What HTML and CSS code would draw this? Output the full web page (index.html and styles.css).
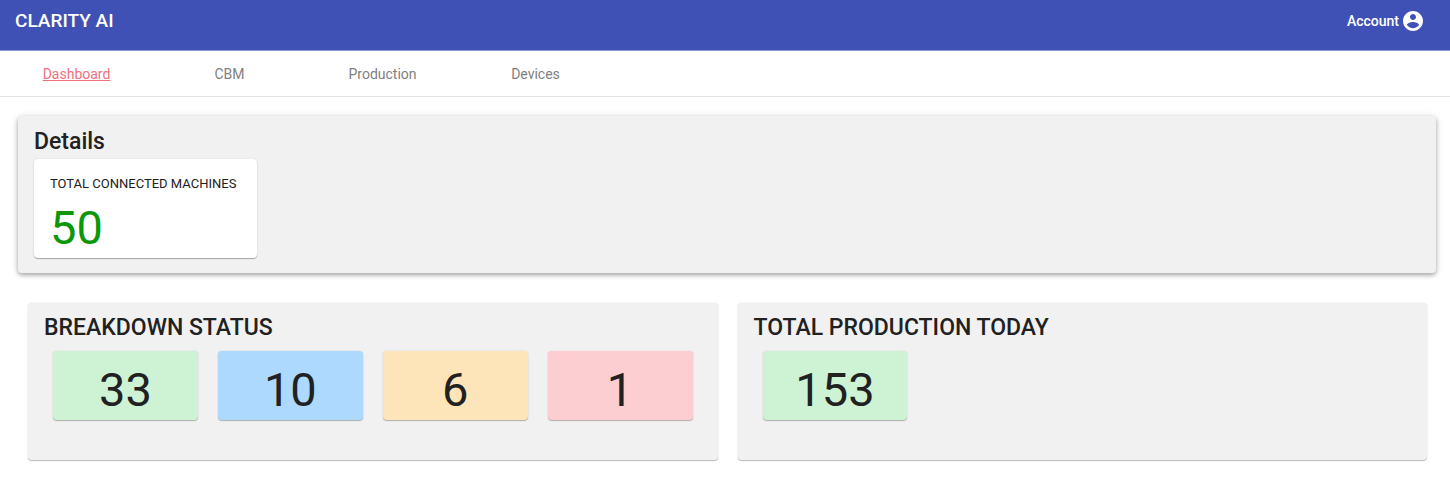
FILE: index.html
```html
<!DOCTYPE html>
<html lang="en">
<head>
    <meta charset="UTF-8">
    <meta name="viewport" content="width=device-width, initial-scale=1.0">
    <title>Clarity AI</title>
    <link rel="stylesheet" href="styles.css">
</head>
<body>
    <header class="topbar">
        <h1>CLARITY AI</h1>
        <button type="button" class="account">
            Account
            <svg viewBox="2 2 20 20" aria-hidden="true"><path fill="currentColor" d="M12 2C6.480 2 2 6.480 2 12s4.480 10 10 10 10-4.480 10-10S17.520 2 12 2zm0 3c1.660 0 3 1.340 3 3s-1.340 3-3 3-3-1.340-3-3 1.340-3 3-3zm0 14.200c-2.500 0-4.710-1.280-6-3.220.030-1.990 4-3.080 6-3.080 1.990 0 5.970 1.090 6 3.080-1.290 1.940-3.500 3.220-6 3.220z"/></svg>
        </button>
    </header>

    <nav class="tabs">
        <a href="#dashboard" class="active">Dashboard</a>
        <a href="#cbm">CBM</a>
        <a href="#production">Production</a>
        <a href="#devices">Devices</a>
    </nav>

    <main>
        <section class="panel details">
            <h2>Details</h2>
            <div class="machines">
                <p>TOTAL CONNECTED MACHINES</p>
                <strong>50</strong>
            </div>
        </section>

        <div class="row">
            <section class="panel">
                <h2>BREAKDOWN STATUS</h2>
                <div class="tiles">
                    <div class="tile green">33</div>
                    <div class="tile blue">10</div>
                    <div class="tile orange">6</div>
                    <div class="tile red">1</div>
                </div>
            </section>
            <section class="panel">
                <h2>TOTAL PRODUCTION TODAY</h2>
                <div class="tiles">
                    <div class="tile green">153</div>
                </div>
            </section>
        </div>
    </main>
</body>
</html>
```
FILE: styles.css
```css
* {
    box-sizing: border-box;
}

body {
    font-family: Roboto, sans-serif;
    background-color: white;
    color: #212121;
    margin: 0;
}

h1, h2, p {
    margin: 0;
}

.topbar {
    display: flex;
    justify-content: space-between;
    align-items: center;
    height: 51px;
    padding: 0 27px 9px 15px;
    background-color: #3f51b5;
    border-bottom: 1px solid #8f97d6;
    color: white;
}

.topbar h1 {
    font-size: 19px;
    line-height: 24px;
    font-weight: 500;
}

.account {
    display: flex;
    align-items: center;
    gap: 4px;
    padding: 0;
    border: none;
    background: none;
    color: white;
    font-family: inherit;
    font-size: 14px;
    font-weight: 500;
    cursor: pointer;
}

.account svg {
    width: 20px;
    height: 20px;
}

.tabs {
    display: flex;
    height: 46px;
    border-bottom: 1px solid #e4e4e4;
}

.tabs a {
    width: 153px;
    line-height: 46px;
    text-align: center;
    font-size: 14px;
    color: #808080;
    text-decoration: none;
}

.tabs a.active {
    color: #f07080;
    text-decoration: underline;
}

main {
    padding: 19px 14px 40px 18px;
}

.panel {
    min-height: 157px;
    padding: 10px 16px;
    background-color: #f1f1f1;
    border-radius: 4px;
    box-shadow: 0 1px 1px rgba(0, 0, 0, 0.25), 0 0 2px rgba(0, 0, 0, 0.1);
}

.panel h2 {
    font-size: 23px;
    line-height: 30px;
    font-weight: 500;
}

.details {
    padding: 11px 16px 15px;
    box-shadow: 0 2px 4px rgba(0, 0, 0, 0.3), 0 1px 8px rgba(0, 0, 0, 0.12);
}

.machines {
    width: fit-content;
    min-width: 223px;
    margin-top: 2px;
    padding: 15px 16px 0;
    height: 99px;
    background-color: white;
    border-radius: 4px;
    box-shadow: 0 1px 1px rgba(0, 0, 0, 0.3), 0 0 2px rgba(0, 0, 0, 0.1);
}

.machines p {
    font-size: 13px;
    line-height: 20px;
}

.machines strong {
    display: block;
    font-size: 47px;
    line-height: 68px;
    font-weight: 400;
    color: #0a980a;
}

.row {
    display: grid;
    grid-template-columns: 1fr 1fr;
    gap: 20px;
    margin-top: 30px;
    padding: 0 9px 0 10px;
}

.tiles {
    display: grid;
    grid-template-columns: repeat(4, 1fr);
    gap: 20px;
    margin-top: 8px;
    padding: 0 9px;
}

.tile {
    height: 69px;
    border-radius: 4px;
    text-align: center;
    font-size: 47px;
    line-height: 78px;
    box-shadow: 0 1px 1px rgba(0, 0, 0, 0.25), 0 0 2px rgba(0, 0, 0, 0.1);
}

.green {
    background-color: #cdf2d4;
}

.blue {
    background-color: #acd9fd;
}

.orange {
    background-color: #fde5b9;
}

.red {
    background-color: #fccdd1;
}
```
